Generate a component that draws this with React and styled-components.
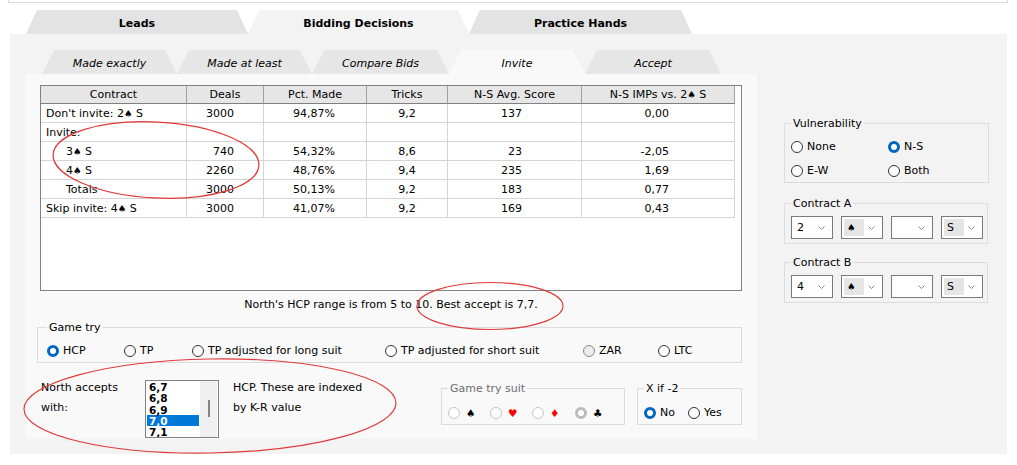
import React from 'react';
import styled, { createGlobalStyle } from 'styled-components';

const GlobalStyle = createGlobalStyle`
  body {
    margin: 0;
    background: #ffffff;
    font-family: "DejaVu Sans", Tahoma, sans-serif;
    font-size: 11px;
    color: #000000;
  }
`;

const Page = styled.div`
  position: relative;
  width: 1017px;
  height: 465px;
  overflow: hidden;
`;

const TopStrip = styled.div`
  height: 2px;
  margin: 0 9px 0 8px;
  border: 1px solid #d9d9d9;
  border-top: none;
`;

const MainTabs = styled.div`
  display: flex;
  margin-top: 7px;
  padding-left: 26px;
  height: 24px;
`;

const MainTab = styled.div`
  width: ${p => p.$w}px;
  height: 24px;
  box-sizing: border-box;
  padding-top: 2px;
  display: flex;
  align-items: center;
  justify-content: center;
  font-weight: bold;
  background: ${p => (p.$active ? '#f3f3f3' : '#e3e3e3')};
  clip-path: polygon(11px 0, calc(100% - 11px) 0, 100% 100%, 0 100%);
`;

const Panel = styled.div`
  margin-left: 10px;
  width: 997px;
  height: 420px;
  background: #f3f3f3;
  display: flex;
  align-items: flex-start;
`;

const LeftCol = styled.div`
  padding: 16px 0 0 15px;
`;

const SubTabs = styled.div`
  display: flex;
  padding-left: 17px;
  height: 24px;
`;

const SubTab = styled.div`
  width: ${p => p.$w}px;
  height: 24px;
  box-sizing: border-box;
  padding-top: 2px;
  display: flex;
  align-items: center;
  justify-content: center;
  font-style: italic;
  background: ${p => (p.$active ? '#f9f9f9' : '#e6e6e6')};
  clip-path: polygon(12px 0, calc(100% - 12px) 0, 100% 100%, 0 100%);
`;

const SubPanel = styled.div`
  width: 732px;
  height: 365px;
  box-sizing: border-box;
  padding: 11px 15px 0;
  background: #f9f9f9;
`;

const ListView = styled.div`
  width: 702px;
  height: 206px;
  box-sizing: border-box;
  border: 1px solid #828282;
  background: #ffffff;
`;

const Row = styled.div`
  display: grid;
  grid-template-columns: 146px 77px 103px 81px 134px 153px;
`;

const HeadCell = styled.div`
  height: 18px;
  line-height: 18px;
  box-sizing: border-box;
  text-align: center;
  background: #e6e6e6;
  border-right: 1px solid #a0a0a0;
  border-bottom: 1px solid #7f7f7f;
`;

const Cell = styled.div`
  height: 19px;
  line-height: 20px;
  box-sizing: border-box;
  border-right: 1px solid #d5d5d5;
  border-bottom: 1px solid #d5d5d5;
  text-align: ${p => p.$align || 'right'};
  padding-left: ${p => p.$pl || 0}px;
  padding-right: ${p => p.$pr || 0}px;
  white-space: nowrap;
  overflow: hidden;
`;

const Pip = styled.span`
  font-size: 9.5px;
  color: ${p => (p.$red ? '#ff0000' : '#000000')};
`;

const Caption = styled.div`
  margin-top: 7px;
  line-height: 13px;
  text-align: center;
`;

const Group = styled.fieldset`
  margin: ${p => p.$m || '0'};
  padding: ${p => p.$pad};
  width: ${p => p.$w}px;
  box-sizing: border-box;
  min-width: 0;
  border: 1px solid #dcdcdc;
`;

const Legend = styled.legend`
  padding: 0 2px;
  line-height: 13px;
  color: ${p => (p.$disabled ? '#6d6d6d' : '#000000')};
`;

const RadioRow = styled.div`
  display: flex;
  align-items: center;
  height: 13px;
`;

const RadioGrid = styled.div`
  display: grid;
  grid-template-columns: 97px 97px;
  row-gap: 11px;
`;

const Option = styled.label`
  display: flex;
  align-items: center;
  gap: ${p => p.$gap || 4}px;
  width: ${p => (p.$w ? `${p.$w}px` : 'auto')};
  height: 13px;
  color: ${p => (p.$disabled ? '#6d6d6d' : '#000000')};
`;

const RadioDot = styled.span`
  flex: none;
  width: 12px;
  height: 12px;
  box-sizing: border-box;
  border-radius: 50%;
  background: ${p => (p.$tint ? '#ececec' : '#ffffff')};
  border: ${p =>
    p.$checked
      ? `3.5px solid ${p.$disabled ? '#bcbcbc' : '#0067c0'}`
      : `1px solid ${p.$disabled ? '#c4c4c4' : p.$tint ? '#8a8a8a' : '#333333'}`};
`;

const Suit = styled.span`
  font-size: 10.5px;
  color: ${p => (p.$red ? '#ff0000' : '#000000')};
`;

const BottomRow = styled.div`
  display: flex;
  align-items: flex-start;
  margin-top: 17px;
`;

const AcceptLabel = styled.div`
  width: 104px;
  margin: -2px 0 0 1px;
  line-height: 20px;
`;

const ListBox = styled.div`
  width: 74px;
  height: 58px;
  box-sizing: border-box;
  border: 1px solid #828282;
  background: #ffffff;
  display: flex;
`;

const ListItems = styled.div`
  width: 54px;
  padding: 0 1px;
  box-sizing: border-box;
  overflow: hidden;
`;

const ListItem = styled.div`
  height: 11.3px;
  line-height: 12px;
  padding-left: 2px;
  font-size: 10.5px;
  font-weight: bold;
  background: ${p => (p.$sel ? '#0078d7' : 'transparent')};
  color: ${p => (p.$sel ? '#ffffff' : '#000000')};
`;

const ScrollTrack = styled.div`
  width: 17px;
  background: #f0f0f0;
  display: flex;
  justify-content: center;
  padding-top: 19px;
  box-sizing: border-box;
`;

const Thumb = styled.div`
  width: 2px;
  height: 17px;
  background: #858585;
`;

const IndexText = styled.div`
  width: 208px;
  margin: -2px 0 0 14px;
  line-height: 20px;
`;

const RightCol = styled.div`
  margin-left: 27px;
  padding-top: 83px;
`;

const SelectRow = styled.div`
  display: flex;
  gap: 8px;
`;

const Select = styled.div`
  width: 42px;
  height: 23px;
  box-sizing: border-box;
  border: 1px solid #7a7a7a;
  background: #ffffff;
  display: flex;
  align-items: center;
  padding-left: 2px;
`;

const SelValue = styled.span`
  width: 20px;
  height: 17px;
  line-height: 17px;
  padding-left: 3px;
  box-sizing: border-box;
  background: ${p => (p.$hl ? '#e5e5e5' : 'transparent')};
`;

const ChevronBox = styled.svg`
  margin-left: auto;
  margin-right: 7px;
`;

const Overlay = styled.svg`
  position: absolute;
  left: 0;
  top: 0;
  pointer-events: none;
`;

const Chevron = () => (
  <ChevronBox width="7" height="4" viewBox="0 0 7 4">
    <polyline points="0.5,0.5 3.5,3.5 6.5,0.5" fill="none" stroke="#8a8a8a" strokeWidth="1" />
  </ChevronBox>
);

const Radio = ({ checked, disabled, tint, children, w, gap }) => (
  <Option $w={w} $gap={gap} $disabled={disabled}>
    <RadioDot $checked={checked} $disabled={disabled} $tint={tint} />
    {children}
  </Option>
);

// splits text on the spade so the pip can be drawn a touch smaller
const withPips = text =>
  text.split('\u2660').flatMap((part, i) =>
    i === 0 ? [part] : [<Pip key={i}>{'\u2660'}</Pip>, part]
  );

const heads = ['Contract', 'Deals', 'Pct. Made', 'Tricks', 'N-S Avg. Score', 'N-S IMPs vs. 2\u2660 S'];

const rows = [
  { c: "Don't invite: 2\u2660 S", v: ['3000', '94,87%', '9,2', '137', '0,00'] },
  { c: 'Invite:', v: ['', '', '', '', ''] },
  { c: '3\u2660 S', indent: true, v: ['740', '54,32%', '8,6', '23', '-2,05'] },
  { c: '4\u2660 S', indent: true, v: ['2260', '48,76%', '9,4', '235', '1,69'] },
  { c: 'Totals', indent: true, v: ['3000', '50,13%', '9,2', '183', '0,77'] },
  { c: 'Skip invite: 4\u2660 S', v: ['3000', '41,07%', '9,2', '169', '0,43'] },
];

// right padding per numeric column, tricks are centred
const numCols = [
  { align: 'right', pr: 29 },
  { align: 'right', pr: 31 },
  { align: 'center', pr: 0 },
  { align: 'right', pr: 59 },
  { align: 'right', pr: 65 },
];

const accepts = ['6,7', '6,8', '6,9', '7,0', '7,1'];

const ContractSelects = ({ level }) => (
  <SelectRow>
    <Select><SelValue>{level}</SelValue><Chevron /></Select>
    <Select><SelValue $hl><Pip>{'\u2660'}</Pip></SelValue><Chevron /></Select>
    <Select><SelValue /><Chevron /></Select>
    <Select><SelValue $hl>S</SelValue><Chevron /></Select>
  </SelectRow>
);

export default function App() {
  return (
    <Page>
      <GlobalStyle />
      <TopStrip />
      <MainTabs>
        <MainTab $w={222}>Leads</MainTab>
        <MainTab $w={221} $active>Bidding Decisions</MainTab>
        <MainTab $w={223}>Practice Hands</MainTab>
      </MainTabs>
      <Panel>
        <LeftCol>
          <SubTabs>
            <SubTab $w={135}>Made exactly</SubTab>
            <SubTab $w={135}>Made at least</SubTab>
            <SubTab $w={137}>Compare Bids</SubTab>
            <SubTab $w={136} $active>Invite</SubTab>
            <SubTab $w={136}>Accept</SubTab>
          </SubTabs>
          <SubPanel>
            <ListView>
              <Row>
                {heads.map(h => <HeadCell key={h}>{withPips(h)}</HeadCell>)}
              </Row>
              {rows.map(r => (
                <Row key={r.c}>
                  <Cell $align="left" $pl={r.indent ? 25 : 5}>{withPips(r.c)}</Cell>
                  {r.v.map((v, i) => (
                    <Cell key={i} $align={numCols[i].align} $pr={numCols[i].pr}>{v}</Cell>
                  ))}
                </Row>
              ))}
            </ListView>
            <Caption>North's HCP range is from 5 to 10. Best accept is 7,7.</Caption>
            <Group $w={705} $m="10px 0 0 -3px" $pad="10px 0 5px 9px">
              <Legend>Game try</Legend>
              <RadioRow>
                <Radio w={77} checked>HCP</Radio>
                <Radio w={68}>TP</Radio>
                <Radio w={193}>TP adjusted for long suit</Radio>
                <Radio w={198}>TP adjusted for short suit</Radio>
                <Radio w={75} tint>ZAR</Radio>
                <Radio>LTC</Radio>
              </RadioRow>
            </Group>
            <BottomRow>
              <AcceptLabel>North accepts<br />with:</AcceptLabel>
              <ListBox>
                <ListItems>
                  {accepts.map(a => <ListItem key={a} $sel={a === '7,0'}>{a}</ListItem>)}
                </ListItems>
                <ScrollTrack><Thumb /></ScrollTrack>
              </ListBox>
              <IndexText>HCP. These are indexed<br />by K-R value</IndexText>
              <Group $w={184} $m="2px 0 0 0" $pad="11px 0 5px 6px">
                <Legend $disabled>Game try suit</Legend>
                <RadioRow>
                  <Radio w={42} gap={6} disabled><Suit>{'\u2660'}</Suit></Radio>
                  <Radio w={42} gap={6} disabled><Suit $red>{'\u2665'}</Suit></Radio>
                  <Radio w={43} gap={6} disabled><Suit $red>{'\u2666'}</Suit></Radio>
                  <Radio gap={6} disabled checked><Suit>{'\u2663'}</Suit></Radio>
                </RadioRow>
              </Group>
              <Group $w={105} $m="2px 0 0 12px" $pad="11px 0 5px 6px">
                <Legend>X if -2</Legend>
                <RadioRow>
                  <Radio w={44} checked>No</Radio>
                  <Radio>Yes</Radio>
                </RadioRow>
              </Group>
            </BottomRow>
          </SubPanel>
        </LeftCol>
        <RightCol>
          <Group $w={205} $pad="10px 0 5px 6px">
            <Legend>Vulnerability</Legend>
            <RadioGrid>
              <Radio>None</Radio>
              <Radio checked>N-S</Radio>
              <Radio>E-W</Radio>
              <Radio>Both</Radio>
            </RadioGrid>
          </Group>
          <Group $w={204} $m="14px 0 0 0" $pad="6px 0 4px 6px">
            <Legend>Contract A</Legend>
            <ContractSelects level="2" />
          </Group>
          <Group $w={204} $m="12px 0 0 0" $pad="6px 0 4px 6px">
            <Legend>Contract B</Legend>
            <ContractSelects level="4" />
          </Group>
        </RightCol>
      </Panel>
      <Overlay width="1017" height="465" viewBox="0 0 1017 465">
        <g fill="none" stroke="#e03a3a" strokeWidth="1.2">
          <ellipse cx="156" cy="160" rx="103" ry="38" transform="rotate(3 156 160)" />
          <ellipse cx="490" cy="306" rx="73" ry="23.5" />
          <ellipse cx="210" cy="406" rx="186" ry="47" transform="rotate(-1 210 406)" />
        </g>
      </Overlay>
    </Page>
  );
}
